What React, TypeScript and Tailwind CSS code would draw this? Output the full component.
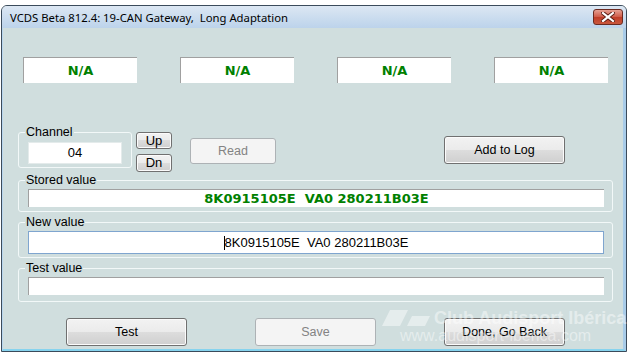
import React from "react";

const btn =
  "flex items-center justify-center rounded-[3px] border border-[#707070] bg-[linear-gradient(to_bottom,#f2f2f2_0%,#ebebeb_50%,#dddddd_50%,#cfcfcf_100%)] shadow-[inset_0_0_0_1px_#fbfbfb] text-black";
const btnOff =
  "flex items-center justify-center rounded-[3px] border border-[#adb2b5] bg-[#f4f4f4] text-[#838383]";
const sunken = "border-t border-l border-[#a0a0a0] bg-white";
const green = "font-['DejaVu_Sans',sans-serif] font-bold text-[13px] text-[#008000]";

function Group({ label, children, className }: { label: string; children: React.ReactNode; className: string }) {
  return (
    <fieldset className={"border border-[#f2f8f8] rounded-[3px] pl-[6px] " + className}>
      <legend className="px-[1px] text-[12.5px] leading-[14px]">{label}</legend>
      {children}
    </fieldset>
  );
}

export default function App() {
  return (
    <div className="relative w-[629px] h-[355px] bg-white overflow-hidden font-['Liberation_Sans',Arial,sans-serif] text-black">
      <div className="ml-[1px] mt-[5px] w-[626px] h-[347px] flex flex-col border border-[#3b4b5b] rounded-t-[6px] bg-[#d0dede] overflow-hidden">
        {/* title bar */}
        <div className="h-[22px] flex items-center justify-between pl-[8px] pr-[3px] bg-[linear-gradient(to_bottom,#dce7f3,#bcd3eb)]">
          <span className="font-['Noto_Sans',sans-serif] text-[11.3px] leading-none text-black mt-[1px]">
            VCDS Beta 812.4: 19-CAN Gateway,&nbsp; Long Adaptation
          </span>
          <div className="w-[30px] h-[16px] rounded-[3px] border border-[#6b2a20] bg-[linear-gradient(to_bottom,#e6a093,#cf5a47_50%,#bf3c27_50%,#c9573d)] flex items-center justify-center">
            <svg width="14" height="10" viewBox="0 0 14 10">
              <path d="M2 1 L12 9 M12 1 L2 9" stroke="#5a1d14" strokeWidth="4" strokeLinecap="square" />
              <path d="M2 1 L12 9 M12 1 L2 9" stroke="#fff" strokeWidth="2.2" strokeLinecap="square" />
            </svg>
          </div>
        </div>

        {/* body */}
        <div className="flex-1 flex flex-col border-l border-[#b9d6ee] border-r-[3px] border-r-[#a9cce9] border-b-2 border-b-[#86d3ee]">
          <div className="mt-[29px] ml-[20px] flex gap-[43px]">
            {["N/A", "N/A", "N/A", "N/A"].map((t, i) => (
              <div key={i} className={sunken + " w-[114px] h-[26px] flex items-center justify-center " + green}>
                {t}
              </div>
            ))}
          </div>

          <div className="mt-[42px] ml-[15px] flex items-start">
            <Group label="Channel" className="w-[114px] h-[43px]">
              <div className="mt-[3px] ml-[3px] w-[94px] h-[22px] bg-white border border-[#e4ebeb] flex items-center justify-center text-[13px]">
                04
              </div>
            </Group>
            <div className="ml-[4px] mt-[7px] flex flex-col gap-[5px]">
              <div className={btn + " w-[36px] h-[17px] text-[13px]"}>Up</div>
              <div className={btn + " w-[36px] h-[18px] text-[13px]"}>Dn</div>
            </div>
            <div className={btnOff + " ml-[18px] mt-[13px] w-[86px] h-[26px] text-[12.5px]"}>Read</div>
            <div className={btn + " ml-[168px] mt-[11px] w-[121px] h-[28px] text-[12.5px]"}>Add to Log</div>
          </div>

          <Group label="Stored value" className="mt-[1px] ml-[15px] w-[595px] h-[39px]">
            <div className={sunken + " mt-[2px] ml-[3px] w-[576px] h-[18px] flex items-center justify-center " + green}>
              8K0915105E&nbsp; VA0 280211B03E
            </div>
          </Group>

          <Group label="New value" className="mt-[3px] ml-[15px] w-[595px] h-[43px]">
            <div className="mt-[2px] ml-[3px] w-[576px] h-[23px] bg-white border border-[#7fa5cf] flex items-center justify-center text-[13px]">
              <span className="inline-block w-px h-[14px] bg-black" />
              8K0915105E&nbsp; VA0 280211B03E
            </div>
          </Group>

          <Group label="Test value" className="mt-[3px] ml-[15px] w-[595px] h-[41px]">
            <div className={sunken + " mt-[2px] ml-[3px] w-[576px] h-[18px]"} />
          </Group>

          <div className="mt-[16px] ml-[63px] flex gap-[68px]">
            <div className={btn + " w-[121px] h-[28px] text-[12.5px]"}>Test</div>
            <div className={btnOff + " w-[121px] h-[28px] text-[12.5px]"}>Save</div>
            <div className={btn + " w-[121px] h-[28px] text-[12.5px]"}>Done, Go Back</div>
          </div>
        </div>
      </div>

      {/* watermark */}
      <div className="absolute left-[382px] top-[309px] flex flex-col items-start text-white/45 pointer-events-none">
        <div className="flex items-center gap-[4px]">
          <svg width="48" height="16" viewBox="0 0 48 16">
            <polygon points="8,0 26,0 18,16 0,16" fill="rgba(255,255,255,0.45)" />
            <polygon points="30,6 48,6 43,16 25,16" fill="rgba(255,255,255,0.45)" />
          </svg>
          <span className="text-[18px] font-bold leading-none">Club Audisport Ibérica</span>
        </div>
        <span className="ml-[18px] text-[16px] leading-none mt-[1px]">www.audisport-iberica.com</span>
      </div>
    </div>
  );
}
